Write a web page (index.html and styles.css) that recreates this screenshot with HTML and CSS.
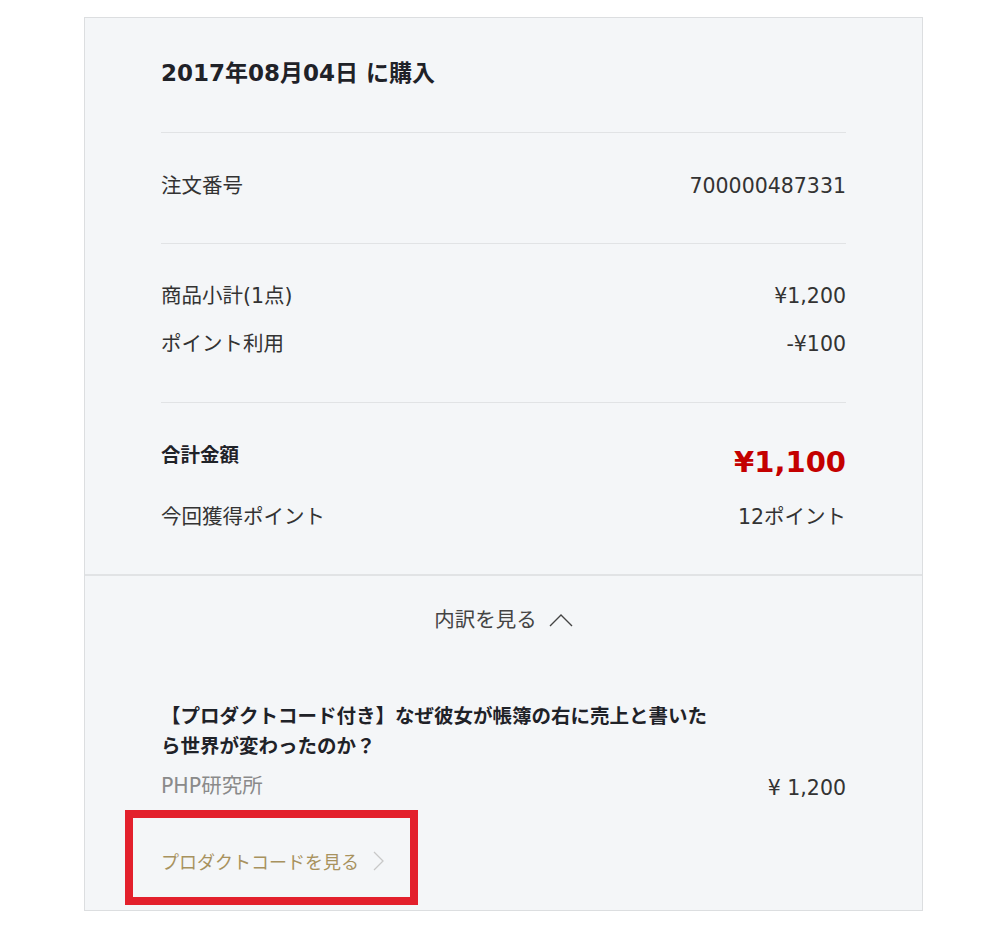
FILE: index.html
```html
<!DOCTYPE html>
<html lang="ja">
<head>
  <meta charset="UTF-8">
  <title>購入履歴</title>
  <link rel="stylesheet" href="styles.css">
</head>
<body>

<div class="order-card">
  <div class="summary">
    <div class="block head">
      <h2 class="order-date">2017年08月04日 に購入</h2>
    </div>

    <div class="block">
      <div class="row">
        <span>注文番号</span>
        <span>700000487331</span>
      </div>
    </div>

    <div class="block rows">
      <div class="row">
        <span>商品小計(1点)</span>
        <span>¥1,200</span>
      </div>
      <div class="row">
        <span>ポイント利用</span>
        <span>-¥100</span>
      </div>
    </div>

    <div class="block total">
      <div class="row total-row">
        <span class="total-label">合計金額</span>
        <span class="total-price">¥1,100</span>
      </div>
      <div class="row">
        <span>今回獲得ポイント</span>
        <span>12ポイント</span>
      </div>
    </div>
  </div>

  <div class="detail">
    <div class="toggle">
      内訳を見る
      <svg width="24" height="14" viewBox="0 0 24 14"><path d="M1 13 L12 2 L23 13" fill="none" stroke="#444" stroke-width="1.4"/></svg>
    </div>

    <div class="item">
      <p class="item-title">【プロダクトコード付き】なぜ彼女が帳簿の右に売上と書いたら世界が変わったのか？</p>
      <div class="row">
        <span class="publisher">PHP研究所</span>
        <span class="item-price">¥ 1,200</span>
      </div>
      <a class="code-link" href="#">
        プロダクトコードを見る
        <svg width="12" height="20" viewBox="0 0 12 20"><path d="M1 1 L10 10 L1 19" fill="none" stroke="#c8c8c8" stroke-width="1.3"/></svg>
      </a>
      <!-- annotation box -->
      <div class="highlight"></div>
    </div>
  </div>
</div>

</body>
</html>
```

FILE: styles.css
```css
body {
  margin: 0;
  font-family: 'DejaVu Sans', 'Noto Sans CJK JP', sans-serif;
  background: #fff;
  color: #333;
}

.order-card {
  margin: 17px 0 0 84px;
  width: 837px;
  background: #f4f6f8;
  border: 1px solid #dcdee0;
}

.summary {
  padding: 0 76px;
  border-bottom: 2px solid #e1e3e5;
}

.block {
  border-bottom: 1px solid #e1e3e5;
  padding: 38px 0 42px;
}

.block:last-child {
  border-bottom: none;
}

.head {
  padding: 40px 0 44px;
}

.order-date {
  margin: 0;
  font-size: 23px;
  line-height: 30px;
  font-weight: bold;
  color: #1f2228;
}

.row {
  display: flex;
  justify-content: space-between;
  font-size: 20.5px;
  line-height: 30px;
}

.rows {
  display: flex;
  flex-direction: column;
  gap: 18px;
  padding: 37px 0 43px;
}

.total {
  padding: 39px 0 42px;
  display: flex;
  flex-direction: column;
  gap: 20px;
}

.total-row {
  align-items: flex-start;
  line-height: 40px;
}

.total-label {
  font-weight: bold;
  color: #1f2228;
  font-size: 19.5px;
  line-height: 28px;
}

.total-price {
  font-size: 29px;
  font-weight: bold;
  color: #c40000;
}

.detail {
  padding: 29px 76px 34px;
}

.toggle {
  display: flex;
  justify-content: center;
  align-items: center;
  gap: 12px;
  font-size: 20.5px;
  line-height: 30px;
  color: #444;
}

.item {
  position: relative;
  margin-top: 67px;
}

.item-title {
  margin: 0 0 9px;
  width: 565px;
  font-size: 19.5px;
  line-height: 30px;
  font-weight: bold;
  color: #1f2228;
}

.publisher {
  color: #8a8a8a;
}

.item-price {
  color: #333;
  position: relative;
  top: 2px;
}

.code-link {
  display: flex;
  align-items: center;
  gap: 14px;
  margin-top: 45px;
  font-family: 'Noto Sans CJK JP', sans-serif;
  font-size: 18px;
  line-height: 30px;
  color: #a8925e;
  text-decoration: none;
}

.highlight {
  position: absolute;
  left: -36px;
  top: 108px;
  width: 277px;
  height: 79px;
  border: 8px solid #e3202c;
}
```
